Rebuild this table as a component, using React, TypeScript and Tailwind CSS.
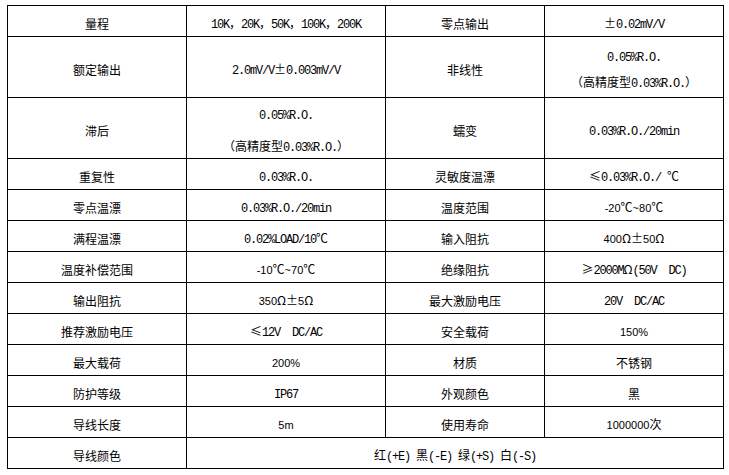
import React from 'react'

type Cell = { lines: string[]; sans?: boolean }

type Row = {
  h: 'single' | 'double'
  gap?: 'narrow' | 'wide'
  cells: [Cell, Cell, Cell, Cell] | [Cell, Cell]
}

const c = (text: string | string[], sans?: boolean): Cell => ({
  lines: Array.isArray(text) ? text : [text],
  sans,
})

const ROWS: Row[] = [
  { h: 'single', cells: [c('量程'), c('10K，20K，50K，100K，200K'), c('零点输出'), c('±0.02mV/V')] },
  {
    h: 'double',
    gap: 'narrow',
    cells: [c('额定输出'), c('2.0mV/V±0.003mV/V'), c('非线性'), c(['0.05%R.O.', '（高精度型0.03%R.O.）'])],
  },
  {
    h: 'double',
    gap: 'wide',
    cells: [c('滞后'), c(['0.05%R.O.', '（高精度型0.03%R.O.）']), c('蠕变'), c('0.03%R.O./20min')],
  },
  { h: 'single', cells: [c('重复性'), c('0.03%R.O.'), c('灵敏度温漂'), c('≤0.03%R.O./ ℃')] },
  { h: 'single', cells: [c('零点温漂'), c('0.03%R.O./20min'), c('温度范围'), c('-20℃~80℃', true)] },
  { h: 'single', cells: [c('满程温漂'), c('0.02%LOAD/10℃'), c('输入阻抗'), c('400Ω±50Ω', true)] },
  { h: 'single', cells: [c('温度补偿范围'), c('-10℃~70℃', true), c('绝缘阻抗'), c('≥2000MΩ(50V  DC)')] },
  { h: 'single', cells: [c('输出阻抗'), c('350Ω±5Ω', true), c('最大激励电压'), c('20V  DC/AC')] },
  { h: 'single', cells: [c('推荐激励电压'), c('≤12V  DC/AC'), c('安全载荷'), c('150%', true)] },
  { h: 'single', cells: [c('最大载荷'), c('200%', true), c('材质'), c('不锈钢')] },
  { h: 'single', cells: [c('防护等级'), c('IP67'), c('外观颜色'), c('黑')] },
  { h: 'single', cells: [c('导线长度'), c('5m', true), c('使用寿命'), c('1000000次', true)] },
  { h: 'single', cells: [c('导线颜色'), c('红(+E) 黑(-E) 绿(+S) 白(-S)')] },
]

// SimSun-like look: half-width latin runs at 6px per char, CJK at 12px
function Mixed({ text, sans }: { text: string; sans?: boolean }) {
  const parts = text.split(/([\x20-\x7E]+)/).filter(Boolean)
  return (
    <>
      {parts.map((p, i) =>
        /^[\x20-\x7E]+$/.test(p) ? (
          <span
            key={i}
            className={
              sans
                ? "font-['Liberation_Sans'] text-[11px]"
                : "font-['Liberation_Mono'] tracking-[-1.2px]"
            }
          >
            {p}
          </span>
        ) : (
          <span key={i}>{p}</span>
        ),
      )}
    </>
  )
}

function TableCell({ cell, row, wide }: { cell: Cell; row: Row; wide?: boolean }) {
  return (
    <div
      className={`flex flex-col items-center justify-center border-r border-b border-black pt-[5px] ${
        row.h === 'double' ? 'h-[61px]' : 'h-[31px]'
      } ${row.gap === 'wide' ? 'gap-[18px]' : 'gap-[12px]'} ${wide ? 'col-span-3' : ''}`}
    >
      {cell.lines.map((line) => (
        <p key={line} className="whitespace-pre leading-[12px]">
          <Mixed text={line} sans={cell.sans} />
        </p>
      ))}
    </div>
  )
}

export default function App() {
  return (
    <div className="h-[475px] w-[729px] bg-white pl-[7px] pt-[5px] font-['Noto_Sans_CJK_SC',sans-serif] text-[12px] text-black">
      <div className="grid w-[717px] grid-cols-[179px_199px_159px_179px] border-t border-l border-black">
        {ROWS.map((row, r) =>
          row.cells.map((cell, i) => (
            <TableCell
              key={`${r}-${i}`}
              cell={cell}
              row={row}
              wide={row.cells.length === 2 && i === 1}
            />
          )),
        )}
      </div>
    </div>
  )
}
